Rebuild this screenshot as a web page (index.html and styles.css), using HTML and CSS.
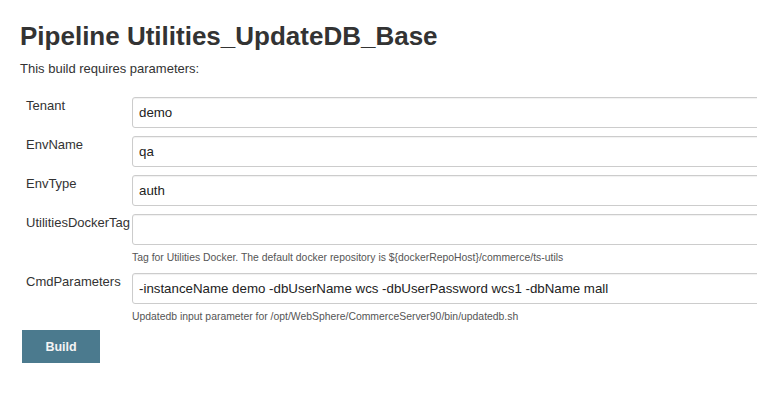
FILE: index.html
```html
<!DOCTYPE html>
<html>
<head>
<meta charset="utf-8">
<link rel="stylesheet" href="styles.css">
</head>
<body>
<div class="page">
  <h1 class="title">Pipeline Utilities_UpdateDB_Base</h1>
  <p class="intro">This build requires parameters:</p>
  <form class="params">
    <div class="row">
      <label class="label">Tenant</label>
      <div class="field"><input class="input" type="text" value="demo"></div>
    </div>
    <div class="row">
      <label class="label">EnvName</label>
      <div class="field"><input class="input" type="text" value="qa"></div>
    </div>
    <div class="row">
      <label class="label">EnvType</label>
      <div class="field"><input class="input" type="text" value="auth"></div>
    </div>
    <div class="row">
      <label class="label">UtilitiesDockerTag</label>
      <div class="field">
        <input class="input" type="text" value="">
        <div class="help">Tag for Utilities Docker. The default docker repository is ${dockerRepoHost}/commerce/ts-utils</div>
      </div>
    </div>
    <div class="row">
      <label class="label">CmdParameters</label>
      <div class="field">
        <input class="input" type="text" value="-instanceName demo -dbUserName wcs -dbUserPassword wcs1 -dbName mall">
        <div class="help">Updatedb input parameter for /opt/WebSphere/CommerceServer90/bin/updatedb.sh</div>
      </div>
    </div>
    <div class="actions">
      <button class="build" type="button">Build</button>
    </div>
  </form>
</div>
</body>
</html>
```

FILE: styles.css
```css
html, body {
  margin: 0;
  padding: 0;
  overflow: hidden;
  background: #fff;
}

body {
  font-family: "Liberation Sans", Arial, Helvetica, sans-serif;
  color: #333;
}

.page {
  padding: 21px 0 0 20px;
}

.title {
  margin: 0;
  font-size: 26px;
  line-height: 30px;
  font-weight: bold;
  color: #333;
}

.intro {
  margin: 10px 0 0 0;
  font-size: 13px;
  line-height: 16px;
}

.params {
  margin-top: 20px;
  width: 780px;
  display: flex;
  flex-direction: column;
  gap: 8px;
}

.row {
  display: grid;
  grid-template-columns: 112px 1fr;
  align-items: start;
}

.label {
  padding-left: 6px;
  font-size: 13px;
  line-height: 16px;
  padding-top: 1px;
  color: #333;
  white-space: nowrap;
}

.field {
  display: flex;
  flex-direction: column;
}

.input {
  box-sizing: border-box;
  width: 100%;
  height: 31px;
  margin: 0;
  padding: 0 6px;
  border: 1px solid #ccc;
  border-radius: 3px;
  box-shadow: inset 0 1px 1px rgba(0, 0, 0, 0.06);
  font-family: "Liberation Sans", Arial, Helvetica, sans-serif;
  font-size: 13.3px;
  color: #222;
  background: #fff;
  outline: none;
}

.help {
  margin-top: 6px;
  font-size: 10.4px;
  line-height: 14px;
  color: #555;
  white-space: nowrap;
}

.actions {
  padding-left: 2px;
  margin-top: -2px;
}

.build {
  width: 78px;
  height: 33px;
  border: none;
  border-radius: 0;
  background: #4b7a8e;
  color: #f4f4f4;
  font-family: "Liberation Sans", Arial, Helvetica, sans-serif;
  font-size: 12.5px;
  font-weight: bold;
  padding: 0;
}
```
